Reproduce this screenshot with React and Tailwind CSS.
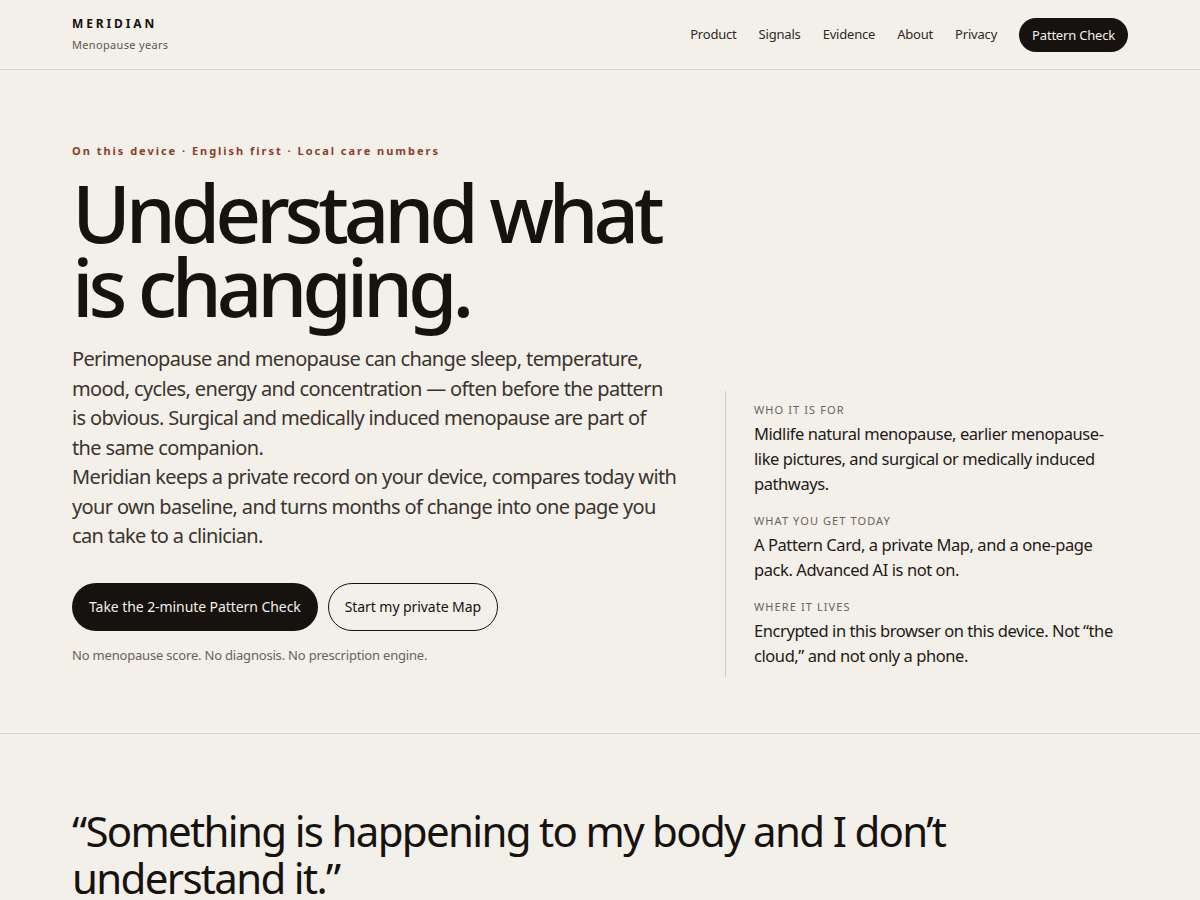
import React from 'react'

const navLinks = ['Product', 'Signals', 'Evidence', 'About', 'Privacy']

const facts = [
  {
    label: 'Who it is for',
    text: 'Midlife natural menopause, earlier menopause-like pictures, and surgical or medically induced pathways.',
  },
  {
    label: 'What you get today',
    text: 'A Pattern Card, a private Map, and a one-page pack. Advanced AI is not on.',
  },
  {
    label: 'Where it lives',
    text: 'Encrypted in this browser on this device. Not \u201cthe cloud,\u201d and not only a phone.',
  },
]

const App = () => {
  return (
    <div className="min-h-screen bg-[#f3efe9] text-[#16120f] font-['Noto_Sans',sans-serif]">
      <header className="border-b border-[#d8d2ca]">
        <div className="mx-auto flex h-[69px] max-w-[1056px] items-center justify-between">
          <div className="flex flex-col">
            <span className="text-[12px] font-bold leading-4 tracking-[0.24em]">MERIDIAN</span>
            <span className="mt-[5px] text-[11px] leading-4 tracking-[0.03em] text-[#5f5852]">Menopause years</span>
          </div>
          <nav className="flex items-center gap-[22px] text-[13px] tracking-[-0.015em] text-[#2f2a26]">
            {navLinks.map((item) => (
              <a key={item} href="#">{item}</a>
            ))}
            <a href="#" className="rounded-full bg-[#16120f] px-[13px] py-[8px] leading-[18px] text-[#f3efe9]">
              Pattern Check
            </a>
          </nav>
        </div>
      </header>

      <section className="border-b border-[#d8d2ca]">
        <div className="mx-auto grid max-w-[1056px] grid-cols-[minmax(0,1fr)_403px] items-end gap-[45px] pt-[73px] pb-[56px]">
          <div className="pb-3">
            <p className="text-[11px] font-bold leading-4 tracking-[0.18em] text-[#8a3e2c]">
              On this device · English first · Local care numbers
            </p>
            <h1 className="mt-4 text-[80px] font-medium leading-[74px] tracking-[-0.065em]">
              Understand what<br />is changing.
            </h1>
            <div className="mt-[21px] max-w-[606px] text-[20px] leading-[29.5px] tracking-[-0.032em] text-[#3a342f]">
              <p>
                Perimenopause and menopause can change sleep, temperature, mood, cycles, energy and concentration — often before the pattern is obvious. Surgical and medically induced menopause are part of the same companion.
              </p>
              <p>
                Meridian keeps a private record on your device, compares today with your own baseline, and turns months of change into one page you can take to a clinician.
              </p>
            </div>
            <div className="mt-8 flex items-center gap-[10px] text-[14px] tracking-[-0.005em]">
              <a href="#" className="flex h-12 items-center rounded-full bg-[#16120f] px-[17px] text-[#f3efe9]">
                Take the 2-minute Pattern Check
              </a>
              <a href="#" className="flex h-12 items-center rounded-full border border-[#16120f] px-4 text-[#16120f]">
                Start my private Map
              </a>
            </div>
            <p className="mt-[14px] text-[13px] leading-5 tracking-[-0.015em] text-[#6a635c]">
              No menopause score. No diagnosis. No prescription engine.
            </p>
          </div>

          <div className="flex flex-col gap-[17px] border-l border-[#d1cbc3] pt-[11px] pb-[9px] pl-[28px]">
            {facts.map((f) => (
              <div key={f.label}>
                <p className="text-[11px] uppercase leading-4 tracking-[0.1em] text-[#6a635c]">{f.label}</p>
                <p className="mt-[3px] text-[16.5px] leading-[25px] tracking-[-0.026em] text-[#1e1a17]">{f.text}</p>
              </div>
            ))}
          </div>
        </div>
      </section>

      <section>
        <div className="mx-auto max-w-[1056px] pt-[73px] pb-16">
          <blockquote className="max-w-[900px] text-[42px] leading-[47px] tracking-[-0.04em]">
            “Something is happening to my body and I don’t understand it.”
          </blockquote>
        </div>
      </section>
    </div>
  )
}

export default App
